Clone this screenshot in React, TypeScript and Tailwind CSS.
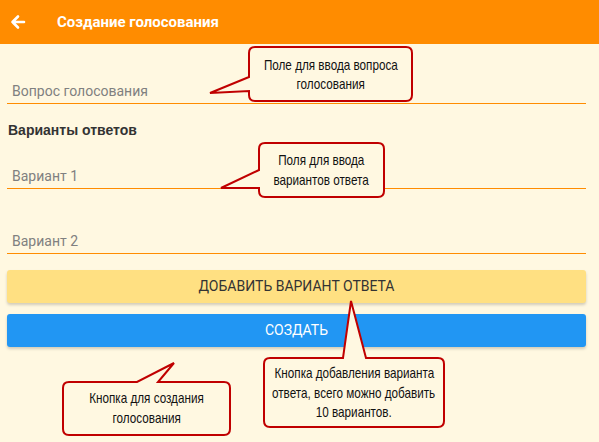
import React from "react";

function Field({ label, className }: { label: string; className: string }) {
  return (
    <div className={`border-b border-[#ff8c00] pl-[5px] pt-[6px] pb-[2px] text-[14px] leading-[20px] text-[#808080] ${className}`}>
      {label}
    </div>
  );
}

function Note({ className, lines, lh }: { className: string; lines: string[]; lh: string }) {
  return (
    <div className={`absolute flex flex-col items-center text-[15px] text-[#111] ${className}`} style={{ fontFamily: '"Liberation Sans", Arial, sans-serif' }}>
      {lines.map((l) => (
        <div key={l} className={`whitespace-nowrap scale-x-[0.78] ${lh}`}>
          {l}
        </div>
      ))}
    </div>
  );
}

export default function App() {
  return (
    <div
      className="relative w-[599px] h-[442px] overflow-hidden bg-[#fff8e1]"
      style={{ fontFamily: 'Roboto, "Liberation Sans", sans-serif' }}
    >
      <div className="h-[44px] bg-[#ff8c00] flex items-center">
        <svg width="16" height="16" viewBox="0 0 16 16" className="ml-[10px]" fill="none" stroke="white" strokeWidth="2.6" strokeLinecap="round" strokeLinejoin="round">
          <path d="M14 8H2.5M8 2.5L2.5 8l5.5 5.5" />
        </svg>
        <div className="ml-[31px] text-white font-bold text-[15px]">
          Создание голосования
        </div>
      </div>

      <div className="pl-[7px] pr-[13px] flex flex-col">
        <Field label="Вопрос голосования" className="mt-[31px]" />
        <div className="mt-[16px] ml-[1px] text-[14px] leading-[20px] font-bold text-[#333]" style={{ fontFamily: '"Liberation Sans", Arial, sans-serif' }}>
          Варианты ответов
        </div>
        <Field label="Вариант 1" className="mt-[20px]" />
        <Field label="Вариант 2" className="mt-[36px]" />
        <button className="mt-[16px] h-[33px] rounded-[3px] bg-[#ffe082] text-[#333] text-[14px] uppercase shadow-[0_2px_3px_rgba(0,0,0,0.18)]">
          Добавить вариант ответа
        </button>
        <button className="mt-[11px] h-[33px] rounded-[3px] bg-[#2196f3] text-white text-[14px] uppercase shadow-[0_2px_3px_rgba(0,0,0,0.18)]">
          Создать
        </button>
      </div>

      <svg className="absolute left-0 top-0" width="599" height="442" viewBox="0 0 599 442" fill="#fff8e1" stroke="#c00000" strokeWidth="2" strokeLinejoin="miter">
        <path d="M255 47 H406 Q412 47 412 53 V95 Q412 101 406 101 H255 Q249 101 249 95 V91 L210 93 L249 77 V53 Q249 47 255 47 Z" />
        <path d="M265 143 H378 Q384 143 384 149 V191 Q384 197 378 197 H265 Q259 197 259 191 V188 L221 188 L259 170 V149 Q259 143 265 143 Z" />
        <path d="M270 358 H343 L351 301 L366 358 H438 Q444 358 444 364 V421 Q444 427 438 427 H270 Q264 427 264 421 V364 Q264 358 270 358 Z" />
        <path d="M69 382 H137 L174 363 L158 382 H224 Q230 382 230 388 V429 Q230 435 224 435 H69 Q63 435 63 429 V388 Q63 382 69 382 Z" />
      </svg>

      <Note className="left-[249px] top-[55px] w-[163px]" lh="leading-[19px]" lines={["Поле для ввода вопроса", "голосования"]} />
      <Note className="left-[259px] top-[150px] w-[125px]" lh="leading-[20px]" lines={["Поля для ввода", "вариантов ответа"]} />
      <Note className="left-[264px] top-[363px] w-[180px]" lh="leading-[19.5px]" lines={["Кнопка добавления варианта", "ответа, всего можно добавить", "10 вариантов."]} />
      <Note className="left-[63px] top-[388px] w-[167px]" lh="leading-[20px]" lines={["Кнопка для создания", "голосования"]} />
    </div>
  );
}
